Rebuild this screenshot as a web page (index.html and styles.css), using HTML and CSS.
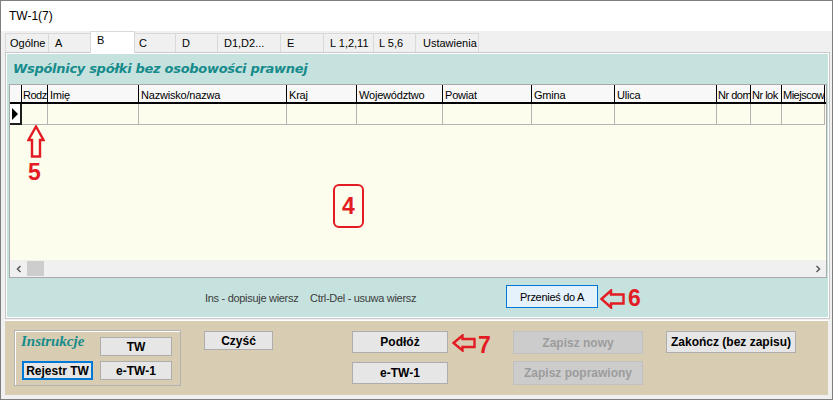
FILE: index.html
```html
<!DOCTYPE html>
<html lang="pl">
<head>
<meta charset="utf-8">
<title>TW-1(7)</title>
<link rel="stylesheet" href="styles.css">
</head>
<body>
<div class="window">
  <div class="titlebar">TW-1(7)</div>
  <div class="frame">
    <div class="tabs">
      <div class="tab">Ogólne</div>
      <div class="tab">A</div>
      <div class="tab active">B</div>
      <div class="tab">C</div>
      <div class="tab">D</div>
      <div class="tab">D1,D2...</div>
      <div class="tab">E</div>
      <div class="tab">L 1,2,11</div>
      <div class="tab">L 5,6</div>
      <div class="tab last">Ustawienia</div>
    </div>
    <div class="panel">
      <div class="teal">
        <h1 class="heading">Wspólnicy spółki bez osobowości prawnej</h1>
        <div class="grid">
          <div class="ghead">
            <div></div>
            <div class="narrow">Rodz</div>
            <div>Imię</div>
            <div>Nazwisko/nazwa</div>
            <div>Kraj</div>
            <div>Województwo</div>
            <div>Powiat</div>
            <div>Gmina</div>
            <div>Ulica</div>
            <div class="narrow">Nr dom</div>
            <div class="narrow">Nr lok</div>
            <div class="narrow">Miejscow</div>
          </div>
          <div class="grow">
            <div class="ind"><span class="tri"></span></div>
            <div></div><div></div><div></div><div></div><div></div>
            <div></div><div></div><div></div><div></div><div></div><div></div>
          </div>
          <div class="gbody">
            <svg class="arrow-up" width="18" height="33" viewBox="0 0 18 33"><path d="M9 1.5 L16.5 15 L13 15 L13 31.5 L5 31.5 L5 15 L1.5 15 Z" fill="none" stroke="#e31b23" stroke-width="2.4" stroke-linejoin="miter"/></svg>
            <span class="mark mark5">5</span>
            <div class="box4 mark">4</div>
          </div>
          <div class="hscroll">
            <div class="sbtn"><svg width="6" height="8" viewBox="0 0 6 8"><polyline points="4.5,1 1.5,4 4.5,7" fill="none" stroke="#606060" stroke-width="1.6"/></svg></div>
            <div class="thumb"></div>
            <div class="strack"></div>
            <div class="sbtn"><svg width="6" height="8" viewBox="0 0 6 8"><polyline points="1.5,1 4.5,4 1.5,7" fill="none" stroke="#606060" stroke-width="1.6"/></svg></div>
          </div>
        </div>
        <div class="foot">
          <span class="hint h1">Ins - dopisuje wiersz</span>
          <span class="hint h2">Ctrl-Del - usuwa wiersz</span>
          <button type="button" class="btn-move">Przenieś do A</button>
          <svg class="arrow-left a6" width="25" height="20" viewBox="0 0 25 20"><path d="M1.5 10 L11 1.5 L11 5.5 L23.5 5.5 L23.5 14.5 L11 14.5 L11 18.5 Z" fill="none" stroke="#e31b23" stroke-width="2.4"/></svg>
          <span class="mark m6">6</span>
        </div>
      </div>
    </div>
    <div class="bottom">
      <div class="group">
        <div class="instr">Instrukcje</div>
        <button type="button" class="btn">TW</button>
        <button type="button" class="btn btn-focus">Rejestr TW</button>
        <button type="button" class="btn">e-TW-1</button>
      </div>
      <button type="button" class="btn btn-clear">Czyść</button>
      <div class="col col-main">
        <button type="button" class="btn">Podłóż</button>
        <button type="button" class="btn">e-TW-1</button>
      </div>
      <div class="note7">
        <svg class="arrow-left" width="24" height="18" viewBox="0 0 24 18"><path d="M1.5 9 L10.5 1.5 L10.5 5 L22.5 5 L22.5 13 L10.5 13 L10.5 16.5 Z" fill="none" stroke="#e31b23" stroke-width="2.4"/></svg>
        <span class="mark m7">7</span>
      </div>
      <div class="col col-save">
        <button type="button" class="btn btn-dis s1" disabled>Zapisz nowy</button>
        <button type="button" class="btn btn-dis s2" disabled>Zapisz poprawiony</button>
      </div>
      <button type="button" class="btn btn-end">Zakończ (bez zapisu)</button>
    </div>
  </div>
</div>
</body>
</html>
```

FILE: styles.css
```css
* { box-sizing: border-box; }

body {
  margin: 0;
  background: #fff;
  font-family: "Liberation Sans", Arial, sans-serif;
  font-size: 11px;
  color: #000;
}

.window {
  width: 833px;
  height: 400px;
  border: 1px solid #7f7f7f;
  background: #fff;
  display: flex;
  flex-direction: column;
}

.titlebar {
  flex: none;
  height: 30px;
  line-height: 30px;
  padding-left: 8px;
  font-size: 12px;
}

.frame {
  flex: 1;
  background: #f0f0f0;
  padding: 0 2px 0 4px;
  display: flex;
  flex-direction: column;
}

/* tabs */
.tabs {
  flex: none;
  height: 21px;
  display: flex;
  align-items: flex-end;
  position: relative;
  z-index: 1;
}
.tab {
  height: 19px;
  border: 1px solid #d9d9d9;
  border-bottom: none;
  margin-right: -1px;
  padding: 3px 0 0 6px;
  line-height: 13px;
  background: #f0f0f0;
  white-space: nowrap;
}
.tab:nth-child(1) { width: 44px; padding-left: 4px; }
.tab:nth-child(2) { width: 43px; }
.tab:nth-child(3) { width: 45px; }
.tab:nth-child(4) { width: 42px; padding-left: 4px; }
.tab:nth-child(5) { width: 43px; }
.tab:nth-child(6) { width: 64px; }
.tab:nth-child(7) { width: 44px; }
.tab:nth-child(8) { width: 51px; }
.tab:nth-child(9) { width: 43px; padding-left: 5px; }
.tab:nth-child(10) { width: 64px; padding-left: 7px; }
.tab.active {
  height: 22px;
  margin-bottom: -1px;
  padding-top: 2px;
  background: #fff;
  position: relative;
  z-index: 2;
}

/* page panel */
.panel {
  flex: none;
  height: 267px;
  border: 1px solid #c8c8c8;
  padding: 1px;
  background: #fff;
}
.teal {
  height: 100%;
  background: #c6e2df;
  display: flex;
  flex-direction: column;
}
.heading {
  flex: none;
  margin: 0;
  height: 30px;
  padding: 7px 0 0 6px;
  font: italic bold 13px/16px "DejaVu Sans", Verdana, sans-serif;
  letter-spacing: -0.3px;
  color: #178b8b;
}

/* grid */
.grid {
  flex: none;
  height: 194px;
  margin: 0 1px 0 2px;
  border: 1px solid #a9a9a9;
  background: #fdfdee;
  display: flex;
  flex-direction: column;
}
.ghead, .grow {
  display: grid;
  grid-template-columns: 12px 26px 91px 148px 70px 86px 89px 83px 102px 34px 31px 43px;
}
.ghead {
  flex: none;
  height: 19px;
  border-bottom: 2px solid #000;
  background: #f8f8f8;
}
.ghead > div {
  border-right: 1px solid #000;
  padding: 3px 0 0 2px;
  line-height: 14px;
  white-space: nowrap;
  overflow: hidden;
  letter-spacing: -0.2px;
}
.ghead > .narrow {
  padding-left: 1px;
  letter-spacing: -0.5px;
}
.grow {
  flex: none;
  height: 21px;
}
.grow > div {
  border-right: 1px solid #b4b4b4;
  border-bottom: 1px solid #b4b4b4;
}
.grow > .ind {
  background: #fff;
  border-right: 2px solid #1e1e1e;
  border-bottom: 2px solid #1e1e1e;
  display: flex;
  align-items: center;
  padding-left: 2px;
}
.tri {
  width: 0;
  height: 0;
  border-left: 6px solid #000;
  border-top: 6px solid transparent;
  border-bottom: 6px solid transparent;
}
.gbody {
  flex: 1;
  position: relative;
}
.hscroll {
  flex: none;
  height: 17px;
  display: flex;
  background: #f0f0f0;
}
.sbtn {
  width: 17px;
  display: flex;
  align-items: center;
  justify-content: center;
}
.thumb {
  width: 17px;
  margin: 1px 0;
  background: #cdcdcd;
}
.strack { flex: 1; }

/* annotations */
.mark {
  font: bold 23px/24px "Liberation Sans", Arial, sans-serif;
  color: #e31b23;
}
.arrow-up {
  position: absolute;
  left: 17px;
  top: 0;
}
.mark5 {
  position: absolute;
  left: 18px;
  top: 35px;
}
.box4 {
  position: absolute;
  left: 323px;
  top: 59px;
  width: 31px;
  height: 44px;
  border: 2.5px solid #e31b23;
  border-radius: 6px;
  display: flex;
  align-items: center;
  justify-content: center;
}

/* footer of page */
.foot {
  flex: 1;
  display: flex;
  align-items: center;
  padding: 0 0 2px 198px;
}
.hint {
  padding-top: 4px;
  line-height: 13px;
  color: #3c3c3c;
  letter-spacing: -0.3px;
  white-space: nowrap;
}
.h1 { width: 105px; }
.h2 { width: 196px; }
.btn-move {
  width: 92px;
  height: 23px;
  padding: 0;
  background: #e5f1fb;
  border: 1px solid #0078d7;
  font: 11px "Liberation Sans", Arial, sans-serif;
  letter-spacing: -0.3px;
  color: #000;
}
.a6 { margin: 4px 0 0 2px; }
.m6 { margin: 2px 0 0 3px; }

/* bottom panel */
.bottom {
  flex: none;
  height: 75px;
  margin: 1px 2px 0 0;
  border-top: 1px solid #fff;
  background: #d8cdb2;
  display: flex;
  align-items: flex-start;
  padding-top: 9px;
}
.group {
  flex: none;
  margin-left: 9px;
  width: 167px;
  height: 56px;
  border: 1px solid #b3b3b3;
  box-shadow: inset 1px 1px 0 #fff;
  display: grid;
  grid-template-columns: 71px 72px;
  grid-template-rows: 19px 19px;
  column-gap: 7px;
  row-gap: 5px;
  padding: 6px 0 0 7px;
}
.instr {
  margin: -3px 0 0 -1px;
  font: italic bold 15px/15px "Liberation Serif", "Times New Roman", serif;
  color: #178b8b;
  white-space: nowrap;
}
.btn {
  padding: 0;
  height: 19px;
  background: #e6e6e6;
  border: 1px solid #adadad;
  font: bold 12px "Liberation Sans", Arial, sans-serif;
  color: #000;
  white-space: nowrap;
}
.btn-focus {
  border: 2px solid #0078d7;
}
.btn-clear {
  flex: none;
  width: 69px;
  margin: 1px 0 0 23px;
}
.col {
  flex: none;
  display: flex;
  flex-direction: column;
}
.col-main {
  width: 96px;
  margin: 1px 0 0 79px;
  gap: 9px;
}
.col-main .btn { height: 22px; }
.note7 {
  flex: none;
  width: 65px;
  display: flex;
  align-items: flex-start;
}
.note7 .arrow-left { margin: 4px 0 0 4px; }
.m7 { margin: 3px 0 0 2px; }
.col-save {
  width: 130px;
  margin-top: 1px;
  gap: 7px;
}
.btn-dis {
  background: #cccccc;
  border-color: #c0c0c0;
  color: #9c9c9c;
}
.s1 { height: 23px; }
.s2 { height: 24px; }
.btn-end {
  flex: none;
  width: 130px;
  height: 22px;
  margin: 1px 0 0 23px;
}
```
